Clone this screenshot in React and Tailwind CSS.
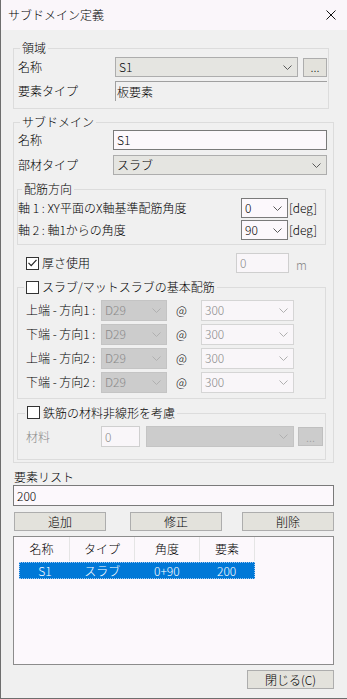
const Chevron = ({ color = "#5a5a5a" }) => (
  <svg width="9" height="5" viewBox="0 0 9 5" className="shrink-0">
    <path d="M0.5 0.5 L4.5 4.5 L8.5 0.5" fill="none" stroke={color} strokeWidth="1" />
  </svg>
);

const Check = ({ checked }) => (
  <span className="flex h-[13px] w-[13px] shrink-0 items-center justify-center border border-[#333333] bg-white">
    {checked && (
      <svg width="9" height="8" viewBox="0 0 9 8">
        <path d="M0.5 3.8 L3.2 6.6 L8.5 0.8" fill="none" stroke="#222222" strokeWidth="1.2" />
      </svg>
    )}
  </span>
);

const Combo = ({ value, className = "", tone = "enabled" }) => {
  const styles = {
    enabled: "bg-[#e5e5e1] border-[#adadad] text-black",
    edit: "bg-[#fcf8fc] border-[#7a7a7a] text-black",
    disabled: "bg-[#cccccc] border-[#c4c4c4] text-[#8a8a8a]",
    faded: "bg-[#f9f6f9] border-[#d5d5d5] text-[#8a8a8a]",
  };
  const chevron = tone === "disabled" || tone === "faded" ? "#b0b0b0" : "#5a5a5a";
  return (
    <div className={`flex items-center justify-between border pl-[3px] pr-[5px] ${styles[tone]} ${className}`}>
      <span>{value}</span>
      <Chevron color={chevron} />
    </div>
  );
};

const Group = ({ legend, legendClass = "ml-[6px]", className = "", children }) => (
  <fieldset className={`border border-[#dcdcdc] ${className}`}>
    <legend className={`px-[2px] leading-[14px] ${legendClass}`}>{legend}</legend>
    {children}
  </fieldset>
);

const Button = ({ label, className = "", disabled }) => (
  <div
    className={`flex items-center justify-center border ${
      disabled ? "bg-[#cccccc] border-[#bfbfbf] text-[#9a9a9a]" : "bg-[#e3e2dc] border-[#adadad] text-black"
    } ${className}`}
  >
    {label}
  </div>
);

const rebar = ["上端 - 方向1 :", "下端 - 方向1 :", "上端 - 方向2 :", "下端 - 方向2 :"];

export default function App() {
  return (
    <div className="flex h-[699px] w-[347px] flex-col border-b border-l border-[#6e6e6e] bg-[#f0f0f0] font-['Noto_Sans_CJK_JP','Noto_Sans',sans-serif] text-[12px] font-light leading-[14px] text-black">
      <div className="flex h-[30px] shrink-0 items-center justify-between bg-[#faf6fa] pl-[7px] pr-[11px]">
        <span>サブドメイン定義</span>
        <svg width="10" height="10" viewBox="0 0 10 10">
          <path d="M0.5 0.5 L9.5 9.5 M9.5 0.5 L0.5 9.5" stroke="#111111" strokeWidth="1" />
        </svg>
      </div>

      <div className="flex flex-col pl-[12px] pt-[11px]">
        <Group legend="領域" className="w-[316px] pb-[7px]">
          <div className="flex items-center pl-[4px] pt-[2px]">
            <span className="w-[97px]">名称</span>
            <Combo value="S1" className="h-[20px] w-[183px]" />
            <Button label="..." className="ml-[5px] h-[19px] w-[24px]" />
          </div>
          <div className="mt-[4px] flex items-center pl-[4px]">
            <span className="w-[97px]">要素タイプ</span>
            <div className="flex h-[20px] w-[212px] items-center border-l border-t border-[#a0a0a0] pl-[1px]">板要素</div>
          </div>
        </Group>

        <Group legend="サブドメイン" className="mt-[6px] w-[321px] pb-[2px]">
          <div className="flex items-center pl-[4px] pt-[1px]">
            <span className="w-[95px]">名称</span>
            <div className="flex h-[20px] w-[214px] items-center border border-[#7a7a7a] bg-[#fcf8fc] pl-[3px]">S1</div>
          </div>
          <div className="mt-[5px] flex items-center pl-[4px]">
            <span className="w-[95px]">部材タイプ</span>
            <Combo value="スラブ" className="h-[20px] w-[214px]" />
          </div>

          <Group legend="配筋方向" legendClass="ml-[4px]" className="ml-[3px] mt-[7px] w-[309px] pb-[4px]">
            <div className="flex items-center pt-[2px]">
              <span className="w-[223px]">軸 1 : XY平面のX軸基準配筋角度</span>
              <Combo value="0" tone="edit" className="h-[20px] w-[47px]" />
              <span className="ml-[1px]">[deg]</span>
            </div>
            <div className="mt-[2px] flex items-center">
              <span className="w-[223px]">軸 2 : 軸1からの角度</span>
              <Combo value="90" tone="edit" className="h-[20px] w-[47px]" />
              <span className="ml-[1px]">[deg]</span>
            </div>
          </Group>

          <div className="mt-[8px] flex h-[20px] items-center pl-[12px]">
            <div className="flex w-[210px] items-center gap-[3px]">
              <Check checked />
              <span>厚さ使用</span>
            </div>
            <div className="flex h-[20px] w-[53px] items-center border border-[#cfcfcf] bg-[#f9f6f9] pl-[3px] text-[#8a8a8a]">0</div>
            <span className="ml-[7px] mt-[4px] text-[#8a8a8a]">m</span>
          </div>

          <Group
            legend={
              <span className="inline-flex items-center gap-[3px]">
                <Check />
                <span>スラブ/マットスラブの基本配筋</span>
              </span>
            }
            className="ml-[3px] mt-[7px] w-[309px] pb-[5px]"
          >
            <div className="flex flex-col gap-[3px] pl-[8px] pt-[4px]">
              {rebar.map((label) => (
                <div key={label} className="flex h-[21px] items-center">
                  <span className="w-[75px]">{label}</span>
                  <Combo value="D29" tone="disabled" className="h-[21px] w-[66px]" />
                  <span className="w-[34px] pl-[9px]">@</span>
                  <Combo value="300" tone="faded" className="h-[21px] w-[93px]" />
                </div>
              ))}
            </div>
          </Group>

          <Group
            legend={
              <span className="inline-flex items-center gap-[3px]">
                <Check />
                <span>鉄筋の材料非線形を考慮</span>
              </span>
            }
            legendClass="ml-[7px]"
            className="ml-[3px] mt-[7px] w-[309px] pb-[12px]"
          >
            <div className="flex items-center pl-[8px] pt-[5px]">
              <span className="w-[75px] text-[#8a8a8a]">材料</span>
              <div className="flex h-[21px] w-[39px] items-center border border-[#cfcfcf] bg-[#f9f6f9] pl-[3px] text-[#8a8a8a]">0</div>
              <Combo value="" tone="disabled" className="ml-[6px] h-[21px] w-[148px]" />
              <Button label="..." disabled className="ml-[4px] h-[19px] w-[25px]" />
            </div>
          </Group>
        </Group>

        <span className="ml-[1px] mt-[7px]">要素リスト</span>
        <div className="mt-[1px] flex h-[21px] w-[321px] items-center border border-[#7a7a7a] bg-[#fcf8fc] pl-[3px]">200</div>

        <div className="mt-[6px] flex">
          <Button label="追加" className="ml-[1px] h-[19px] w-[92px]" />
          <Button label="修正" className="ml-[24px] h-[19px] w-[92px]" />
          <Button label="削除" className="ml-[20px] h-[19px] w-[92px]" />
        </div>

        <div className="mt-[5px] flex h-[129px] w-[321px] flex-col border border-[#8c8c8c] bg-[#fcf8fc]">
          <div className="flex h-[24px] shrink-0">
            {[
              ["名称", "w-[56px]"],
              ["タイプ", "w-[65px]"],
              ["角度", "w-[65px]"],
              ["要素", "w-[55px]"],
            ].map(([h, w]) => (
              <div key={h} className={`flex items-center justify-center border-r border-[#e5e5e5] ${w}`}>
                {h}
              </div>
            ))}
          </div>
          <div className="ml-[5px] mt-[1px] flex h-[17px] w-[236px] border border-dotted border-[#9fc7f0] bg-[#0078d7] text-white">
            <span className="flex w-[50px] items-center justify-center">S1</span>
            <span className="flex w-[65px] items-center justify-center">スラブ</span>
            <span className="flex w-[65px] items-center justify-center">0+90</span>
            <span className="flex w-[55px] items-center justify-center">200</span>
          </div>
        </div>

        <Button label="閉じる(C)" className="ml-[234px] mt-[5px] h-[19px] w-[87px]" />
      </div>
    </div>
  );
}
